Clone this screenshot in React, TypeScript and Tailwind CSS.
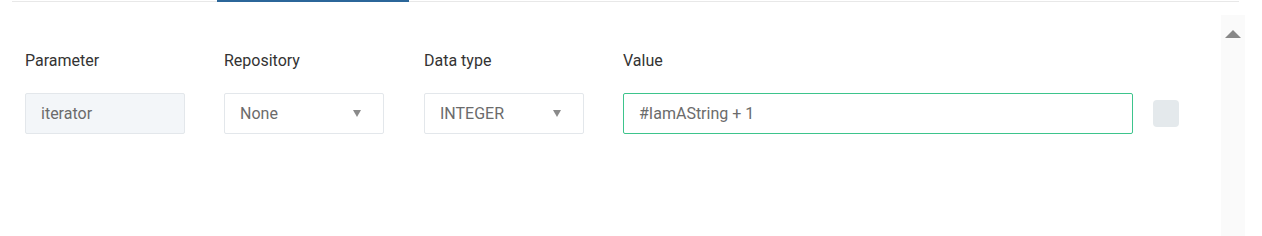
export default function App() {
  const font = { fontFamily: "Roboto, 'Liberation Sans', sans-serif" }
  return (
    <div className="w-[1262px] h-[236px] bg-white relative overflow-hidden" style={font}>
      <div className="flex h-[236px]">
        <div className="flex flex-col w-[1221px]">
          <div className="ml-[12px] w-[1227px] h-[2px] border-t border-[#e8e8e8] mt-[1px] relative">
            <div className="absolute left-[205px] top-[-2px] w-[192px] h-[2px] bg-[#2b6699]" />
          </div>
          <div className="flex pl-[25px] pt-[46px]">
            <Field label="Parameter">
              <div className="w-[160px] h-[41px] bg-[#f3f6f9] border border-[#e3e7eb] rounded-[2px] flex items-center px-[15px] text-[16px] text-[#6b6b6b]">
                iterator
              </div>
            </Field>
            <div className="ml-[39px]">
              <Field label="Repository">
                <Select value="None" />
              </Field>
            </div>
            <div className="ml-[40px]">
              <Field label="Data type">
                <Select value="INTEGER" />
              </Field>
            </div>
            <div className="ml-[39px]">
              <Field label="Value">
                <div className="flex items-center gap-[20px]">
                  <div className="w-[510px] h-[41px] border border-[#3dc48c] rounded-[2px] flex items-center px-[15px] text-[16px] text-[#6b6b6b]">
                    #IamAString + 1
                  </div>
                  <div className="w-[26px] h-[27px] rounded-[4px] bg-[#e4e9ec]" />
                </div>
              </Field>
            </div>
          </div>
        </div>
        <div className="w-[24px] mt-[15px] bg-[#fafafa] flex justify-center pt-[15px]">
          <div className="w-0 h-0 border-l-[8px] border-r-[8px] border-b-[8px] border-l-transparent border-r-transparent border-b-[#888888]" />
        </div>
        <div className="flex-1" />
      </div>
    </div>
  )
}

function Field({ label, children }: { label: string; children: React.ReactNode }) {
  return (
    <div className="flex flex-col">
      <div className="text-[16px] text-[#333333] h-[24px] leading-[24px] mb-[20px]">{label}</div>
      {children}
    </div>
  )
}

function Select({ value }: { value: string }) {
  return (
    <div className="w-[160px] h-[41px] border border-[#e3e7eb] rounded-[2px] flex items-center justify-between pl-[15px] pr-[22px] text-[16px] text-[#6b6b6b]">
      <span>{value}</span>
      <span className="w-0 h-0 border-l-[4px] border-r-[4px] border-t-[7px] border-l-transparent border-r-transparent border-t-[#8a8a8a]" />
    </div>
  )
}
